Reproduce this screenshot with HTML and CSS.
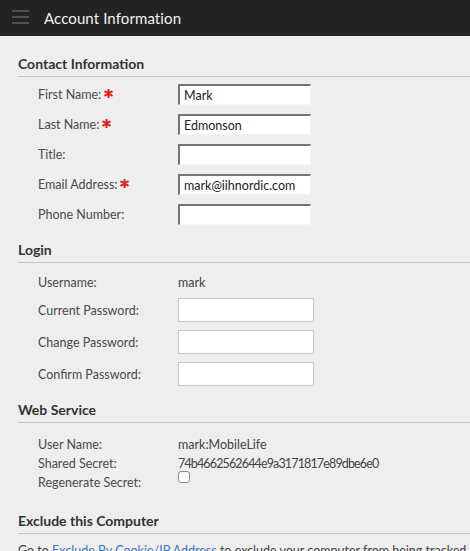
FILE: index.html
```html
<!DOCTYPE html>
<html>
<head>
<meta charset="utf-8">
<link rel="stylesheet" href="styles.css">
</head>
<body>
<header class="topbar">
  <span class="burger"><i></i><i></i><i></i></span>
  <h1 class="title">Account Information</h1>
</header>
<main class="content">
  <section class="section contact">
    <h2 class="heading">Contact Information</h2>
    <div class="grid grid-contact">
      <label class="lbl">First Name: <svg class="req" viewBox="0 0 10 10"><path d="M5 0.8V9.2M1.4 2.9L8.6 7.1M1.4 7.1L8.6 2.9"/></svg></label>
      <input class="field inset" type="text" value="Mark">
      <label class="lbl">Last Name: <svg class="req" viewBox="0 0 10 10"><path d="M5 0.8V9.2M1.4 2.9L8.6 7.1M1.4 7.1L8.6 2.9"/></svg></label>
      <input class="field inset" type="text" value="Edmonson">
      <label class="lbl">Title:</label>
      <input class="field inset" type="text" value="">
      <label class="lbl">Email Address: <svg class="req" viewBox="0 0 10 10"><path d="M5 0.8V9.2M1.4 2.9L8.6 7.1M1.4 7.1L8.6 2.9"/></svg></label>
      <input class="field inset" type="text" value="mark@iihnordic.com">
      <label class="lbl">Phone Number:</label>
      <input class="field inset" type="text" value="">
    </div>
  </section>
  <section class="section login">
    <h2 class="heading">Login</h2>
    <div class="grid grid-login">
      <span class="lbl short">Username:</span>
      <span class="val short">mark</span>
      <label class="lbl">Current Password:</label>
      <input class="field flat" type="password">
      <label class="lbl">Change Password:</label>
      <input class="field flat" type="password">
      <label class="lbl">Confirm Password:</label>
      <input class="field flat" type="password">
    </div>
  </section>
  <section class="section web">
    <h2 class="heading">Web Service</h2>
    <div class="grid grid-web">
      <span class="lbl">User Name:</span>
      <span class="val">mark:MobileLife</span>
      <span class="lbl">Shared Secret:</span>
      <span class="val secret">74b4662562644e9a3171817e89dbe6e0</span>
      <span class="lbl">Regenerate Secret:</span>
      <span class="val"><span class="check"></span></span>
    </div>
  </section>
  <section class="section exclude">
    <h2 class="heading">Exclude this Computer</h2>
    <p class="note">Go to <a class="link" href="#">Exclude By Cookie/IP Address</a> to exclude your computer from being tracked. Please note that this requires cookies.</p>
  </section>
</main>
</body>
</html>
```
FILE: styles.css
```css
html, body {
  margin: 0;
  padding: 0;
  background: #eeeeee;
  overflow: hidden;
}
body {
  font-family: Lato, "Liberation Sans", sans-serif;
  color: #454545;
  width: 470px;
  height: 551px;
}
.topbar {
  height: 36px;
  background: #232323;
  display: flex;
  align-items: center;
  padding-left: 12px;
  gap: 15px;
}
.burger {
  display: flex;
  flex-direction: column;
  gap: 4px;
  width: 17px;
  margin-top: -2px;
}
.burger i {
  display: block;
  height: 2px;
  background: #505050;
}
.title {
  margin: 0;
  font-size: 15px;
  font-weight: 400;
  color: #f2f2f2;
  letter-spacing: 0.1px;
}
.content {
  padding-left: 18px;
}
.heading {
  margin: 0;
  font-size: 14px;
  font-weight: 700;
  color: #333;
  line-height: 18px;
  padding-bottom: 3px;
  border-bottom: 1px solid #c6c6c6;
}
.contact { padding-top: 19px; }
.login { padding-top: 16px; }
.web { padding-top: 15px; }
.exclude { padding-top: 20px; }
.grid {
  display: grid;
  grid-template-columns: 140px 1fr;
  padding-left: 20px;
  align-items: center;
  font-size: 12.5px;
}
.grid-contact {
  padding-top: 7px;
  row-gap: 9px;
  grid-auto-rows: 21px;
}
.grid-login {
  padding-top: 11px;
  row-gap: 8px;
  grid-template-rows: 16px 24px 24px 24px;
}
.grid-web {
  padding-top: 12px;
  grid-auto-rows: 19px;
}
.lbl {
  color: #4a4a4a;
  display: flex;
  align-items: center;
  gap: 3px;
}
.val { color: #444; }
.secret { letter-spacing: -0.85px; }
.req {
  width: 9px;
  height: 9px;
  fill: none;
  stroke: #e0201c;
  stroke-width: 2.2;
  stroke-linecap: round;
  margin-top: -3px;
}
.field {
  box-sizing: border-box;
  margin: 0;
  background: #fff;
  font-family: inherit;
  font-size: 12.5px;
  color: #222;
  outline: none;
}
.inset {
  width: 133px;
  height: 21px;
  border-style: solid;
  border-width: 2px 1px 1px 2px;
  border-color: #757575 #f4f4f4 #f4f4f4 #757575;
  padding: 1px 4px 0;
}
.flat {
  width: 136px;
  height: 24px;
  border: 1px solid #c9c9c9;
  padding: 0 4px;
}
.check {
  display: inline-block;
  width: 10px;
  height: 10px;
  border: 1px solid #8a8a8a;
  border-radius: 3px;
  background: #fff;
  margin-top: -4px;
  vertical-align: top;
}
.note {
  margin: 9px 0 0;
  font-size: 12.5px;
  white-space: nowrap;
  color: #444;
}
.link {
  color: #3a77c2;
  text-decoration: none;
}
```
